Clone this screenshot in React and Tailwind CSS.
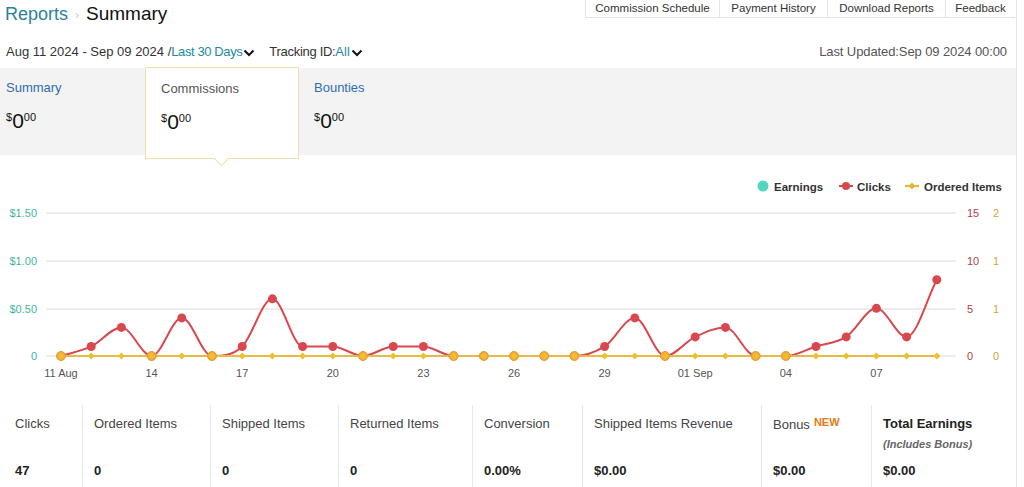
import React from 'react'

const clicks = [0,1,3,0,4,0,1,6,1,1,0,1,1,0,0,0,0,0,1,4,0,2,3,0,0,1,2,5,2,8]
const X0 = 61
const DX = 30.2
const Y0 = 196 // zero line inside svg (page y 356)
const PER = 9.53

const xs = clicks.map((_, i) => X0 + i * DX)
const ys = clicks.map((v) => Y0 - v * PER)

// monotone cubic (Fritsch-Carlson)
function monotonePath(xs, ys) {
  const n = xs.length
  const d = []
  for (let i = 0; i < n - 1; i++) d.push((ys[i + 1] - ys[i]) / (xs[i + 1] - xs[i]))
  const m = [d[0]]
  for (let i = 1; i < n - 1; i++) m.push(d[i - 1] * d[i] <= 0 ? 0 : (d[i - 1] + d[i]) / 2)
  m.push(d[n - 2])
  for (let i = 0; i < n - 1; i++) {
    if (d[i] === 0) { m[i] = 0; m[i + 1] = 0; continue }
    const a = m[i] / d[i], b = m[i + 1] / d[i]
    const s = a * a + b * b
    if (s > 9) { const t = 3 / Math.sqrt(s); m[i] = t * a * d[i]; m[i + 1] = t * b * d[i] }
  }
  let p = `M${xs[0]},${ys[0]}`
  for (let i = 0; i < n - 1; i++) {
    const h = (xs[i + 1] - xs[i]) / 3
    p += ` C${xs[i] + h},${ys[i] + m[i] * h} ${xs[i + 1] - h},${ys[i + 1] - m[i + 1] * h} ${xs[i + 1]},${ys[i + 1]}`
  }
  return p
}

const xLabels = [
  ['11 Aug', 0], ['14', 3], ['17', 6], ['20', 9], ['23', 12], ['26', 15],
  ['29', 18], ['01 Sep', 21], ['04', 24], ['07', 27],
]

const font = { fontFamily: '"Liberation Sans", Arial, sans-serif' }

function Money({ className }) {
  return (
    <div className={`flex items-start text-[#111] ${className}`}>
      <span className="text-[11px] leading-none mt-[2px]">$</span>
      <span className="text-[21px] leading-none">0</span>
      <span className="text-[11px] leading-none mt-[2px]">00</span>
    </div>
  )
}

function Chevron() {
  return (
    <svg width="12" height="8" viewBox="0 0 12 8" className="ml-[1px] mt-[2px]">
      <path d="M1.5 1.5 L6 6 L10.5 1.5" fill="none" stroke="#111" strokeWidth="2" />
    </svg>
  )
}

function Chart() {
  const path = monotonePath(xs, ys)
  const grid = [53, 101, 149]
  return (
    <svg width="1016" height="245" className="block">
      {/* legend */}
      <circle cx="763" cy="26" r="5.5" fill="#4fd8bd" />
      <text x="774" y="30.5" fontSize="11.5" fontWeight="700" fill="#333">Earnings</text>
      <line x1="839" y1="26" x2="853" y2="26" stroke="#d9474f" strokeWidth="2" />
      <circle cx="846" cy="26" r="4" fill="#d9474f" />
      <text x="857" y="30.5" fontSize="11.5" fontWeight="700" fill="#333">Clicks</text>
      <line x1="905" y1="26" x2="919" y2="26" stroke="#eab72c" strokeWidth="2" />
      <path d="M912 22.5 L915.5 26 L912 29.5 L908.5 26 Z" fill="#eab72c" />
      <text x="924" y="30.5" fontSize="11.5" fontWeight="700" fill="#333">Ordered Items</text>

      {/* grid */}
      {grid.map((y) => (
        <line key={y} x1="46" y1={y} x2="956" y2={y} stroke="#e6e6e6" strokeWidth="1.5" />
      ))}
      <line x1="46" y1={Y0} x2="956" y2={Y0} stroke="#e6e6e6" strokeWidth="1.5" />

      {/* left axis */}
      {[['$1.50', 53], ['$1.00', 101], ['$0.50', 149], ['0', Y0]].map(([t, y]) => (
        <text key={t} x="37" y={y + 4} fontSize="11" fill="#3fb79c" textAnchor="end">{t}</text>
      ))}
      {/* right axes */}
      {[['15', 53], ['10', 101], ['5', 149], ['0', Y0]].map(([t, y]) => (
        <text key={t + 'r'} x="967" y={y + 4} fontSize="11" fill="#ab444c">{t}</text>
      ))}
      {[['2', 53], ['1', 101], ['1', 149], ['0', Y0]].map(([t, y], i) => (
        <text key={i} x="993" y={y + 4} fontSize="11" fill="#d6a13c">{t}</text>
      ))}

      {/* x labels */}
      {xLabels.map(([t, i]) => (
        <text key={t} x={xs[i]} y="217" fontSize="11" fill="#555" textAnchor="middle">{t}</text>
      ))}

      {/* clicks */}
      <path d={path} fill="none" stroke="#d9474f" strokeWidth="2" />
      {clicks.map((v, i) => v > 0 && (
        <circle key={i} cx={xs[i]} cy={ys[i]} r="4.5" fill="#d9474f" />
      ))}

      {/* ordered items */}
      <line x1={xs[0]} y1={Y0} x2={xs[29]} y2={Y0} stroke="#e6bb45" strokeWidth="2" />
      {clicks.map((v, i) => v === 0 && (
        <circle key={'z' + i} cx={xs[i]} cy={Y0} r="4.5" fill="#f1a93a" stroke="#e8973a" strokeWidth="1" />
      ))}
      {xs.map((x, i) => (
        <path key={'d' + i} d={`M${x} ${Y0 - 3.5} L${x + 3.5} ${Y0} L${x} ${Y0 + 3.5} L${x - 3.5} ${Y0} Z`} fill="#efc02c" />
      ))}
    </svg>
  )
}

const tabs = [
  ['Commission Schedule', 'w-[134px]'],
  ['Payment History', 'w-[108px]'],
  ['Download Reports', 'w-[118px]'],
  ['Feedback', 'w-[70px]'],
]

const cols = [
  { label: 'Clicks', value: '47', w: 'w-[83px]', pl: 'pl-[15px]' },
  { label: 'Ordered Items', value: '0', w: 'w-[128px]' },
  { label: 'Shipped Items', value: '0', w: 'w-[128px]' },
  { label: 'Returned Items', value: '0', w: 'w-[134px]' },
  { label: 'Conversion', value: '0.00%', w: 'w-[110px]' },
  { label: 'Shipped Items Revenue', value: '$0.00', w: 'w-[179px]' },
  { label: 'Bonus', value: '$0.00', w: 'w-[110px]', isNew: true },
  { label: 'Total Earnings', value: '$0.00', w: 'flex-1', total: true },
]

export default function App() {
  return (
    <div className="w-[1017px] h-[487px] bg-white border-r border-[#e7e7e7] overflow-hidden text-[#333]" style={font}>
      {/* Header */}
      <div className="flex justify-between h-[36px]">
        <div className="flex items-center pl-[5px] pb-[7px]">
          <span className="text-[18px] text-[#2b8298]">Reports</span>
          <span className="text-[#ccc] text-[12px] mx-[7px]">›</span>
          <span className="text-[19px] text-[#111]">Summary</span>
        </div>
        <div className="flex h-[18px] border-b border-[#e3e3e3] text-[11.5px] text-[#333] mr-[1px]">
          {tabs.map(([t, w]) => (
            <div key={t} className={`${w} border-l border-[#e3e3e3] flex items-center justify-center`}>{t}</div>
          ))}
        </div>
      </div>

      {/* Filters */}
      <div className="flex justify-between items-center h-[32px] text-[13px] pr-[9px]">
        <div className="flex items-center pl-[6px]">
          <span className="text-[#333]">Aug 11 2024 - Sep 09 2024 /</span>
          <span className="text-[#1e8aa0] tracking-[-0.4px]">Last 30 Days</span>
          <Chevron />
          <span className="ml-[14px] text-[#333] tracking-[-0.3px]">Tracking ID:</span>
          <span className="text-[#1e8aa0]">All</span>
          <Chevron />
        </div>
        <span className="text-[#555] tracking-[-0.1px]">Last Updated:Sep 09 2024 00:00</span>
      </div>

      {/* Tabs band */}
      <div className="relative z-10 flex items-start h-[87px] bg-[#f3f3f3]">
        <div className="w-[145px] pl-[6px] pt-[10px]">
          <div className="text-[13px] text-[#2f6db3]">Summary</div>
          <Money className="mt-[12px]" />
        </div>
        <div className="relative -mt-[1px] w-[154px] h-[92px] bg-white border border-[#f3dcae] pl-[15px] pt-[11px]">
          <div className="text-[13px] text-[#555]">Commissions</div>
          <Money className="mt-[12px]" />
          <div className="absolute left-[70px] -bottom-[6px] w-[11px] h-[11px] rotate-45 bg-white border-r border-b border-[#f3dcae]" />
        </div>
        <div className="pl-[15px] pt-[10px]">
          <div className="text-[13px] text-[#2f6db3]">Bounties</div>
          <Money className="mt-[12px]" />
        </div>
      </div>

      <div className="h-[5px]" />
      <Chart />

      {/* Totals table */}
      <div className="flex h-[82px] text-[13px]">
        {cols.map((c, i) => (
          <div key={c.label} className={`${c.w} ${c.pl || 'pl-[11px]'} ${i < cols.length - 1 ? 'border-r border-[#e8e8e8]' : ''} flex flex-col pt-[9px]`}>
            <div className="h-[40px]">
              {c.total ? (
                <>
                  <div className="font-bold text-[#222]">Total Earnings</div>
                  <div className="italic font-bold text-[11px] text-[#666] mt-[2px]">(Includes Bonus)</div>
                </>
              ) : (
                <div className="text-[#444]">
                  {c.label}
                  {c.isNew && <span className="ml-[4px] text-[11px] font-bold text-[#e47911] align-[3px]">NEW</span>}
                </div>
              )}
            </div>
            <div className="mt-[7px] font-bold text-[#222]">{c.value}</div>
          </div>
        ))}
      </div>
    </div>
  )
}
